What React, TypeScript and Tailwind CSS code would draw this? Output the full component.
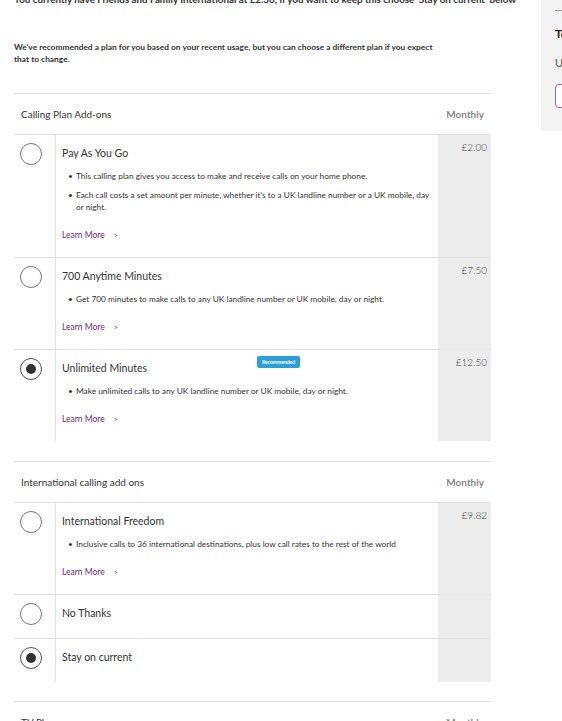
import React from "react";

type Plan = {
  title: string;
  bullets?: string[];
  price?: string;
  learnMore?: boolean;
  checked?: boolean;
  recommended?: boolean;
};

const CALLING_PLANS: Plan[] = [
  {
    title: "Pay As You Go",
    bullets: [
      "This calling plan gives you access to make and receive calls on your home phone.",
      "Each call costs a set amount per minute, whether it's to a UK landline number or a UK mobile, day or night.",
    ],
    price: "£2.00",
    learnMore: true,
  },
  {
    title: "700 Anytime Minutes",
    bullets: ["Get 700 minutes to make calls to any UK landline number or UK mobile, day or night."],
    price: "£7.50",
    learnMore: true,
  },
  {
    title: "Unlimited Minutes",
    bullets: ["Make unlimited calls to any UK landline number or UK mobile, day or night."],
    price: "£12.50",
    learnMore: true,
    checked: true,
    recommended: true,
  },
];

const INTERNATIONAL_PLANS: Plan[] = [
  {
    title: "International Freedom",
    bullets: ["Inclusive calls to 36 international destinations, plus low call rates to the rest of the world"],
    price: "£9.82",
    learnMore: true,
  },
  { title: "No Thanks" },
  { title: "Stay on current", checked: true },
];

function Radio({ checked }: { checked?: boolean }) {
  return (
    <div
      className={`w-[22px] h-[22px] rounded-full border flex items-center justify-center bg-white ${
        checked ? "border-[#555]" : "border-[#777]"
      }`}
    >
      {checked && <div className="w-[10px] h-[10px] rounded-full bg-[#333]" />}
    </div>
  );
}

function PlanRow({ plan, first }: { plan: Plan; first: boolean }) {
  const hasDetails = !!plan.bullets;
  return (
    <div className={`flex ${first ? "" : "border-t border-[#e3e3e3]"}`}>
      <div className="w-[41px] shrink-0 pt-[8px] pl-[6px]">
        <Radio checked={plan.checked} />
      </div>
      <div
        className={`relative flex-1 border-l border-[#e0e0e0] pl-[6px] pt-[11px] ${
          hasDetails ? "pb-[16px]" : "pb-[18px]"
        }`}
      >
        <div className="text-[10.5px] leading-[14px] text-[#333]">{plan.title}</div>
        {plan.recommended && (
          <span className="absolute left-[201px] top-[6px] h-[12px] w-[43px] rounded-[2px] bg-[#2b9fd6] text-white text-[5px] font-bold leading-[12px] text-center">
            Recommended
          </span>
        )}
        {plan.bullets && (
          <ul className="mt-[10px] flex flex-col gap-[7px] pr-[6px]">
            {plan.bullets.map((b, i) => (
              <li key={i} className="flex text-[8.3px] leading-[12px] text-[#333]">
                <span className="w-[14px] shrink-0 pl-[6px]">•</span>
                <span>{b}</span>
              </li>
            ))}
          </ul>
        )}
        {plan.learnMore && (
          <div className="mt-[16px] flex items-center gap-[9px] text-[8.5px] leading-[12px] text-[#6a2d7c]">
            <span>Learn More</span>
            <span className="text-[7px]">&gt;</span>
          </div>
        )}
      </div>
      <div className="w-[53px] shrink-0 bg-[#ececec] pt-[5px] pr-[4px] text-right text-[10px] leading-[14px] font-light text-[#444]">
        {plan.price}
      </div>
    </div>
  );
}

function PlanSection({ heading, plans }: { heading: string; plans: Plan[] }) {
  return (
    <section>
      <div className="border-t border-b border-[#e3e3e3] h-[42px] flex items-center justify-between px-[7px] text-[10px]">
        <span className="text-[#333]">{heading}</span>
        <span className="font-bold text-[#888]">Monthly</span>
      </div>
      {plans.map((p, i) => (
        <PlanRow key={p.title} plan={p} first={i === 0} />
      ))}
    </section>
  );
}

export default function App() {
  return (
    <div className="w-[562px] h-[721px] overflow-hidden bg-white flex font-['Lato','Liberation_Sans',sans-serif] text-[#333]">
      <main className="ml-[14px] w-[477px] shrink-0">
        <p className="-mt-[7px] text-[9.8px] leading-[12px] font-bold text-[#333] whitespace-nowrap">
          You currently have Friends and Family International at £2.30, if you want to keep this choose 'Stay on
          current' below
        </p>
        <p className="mt-[36px] pr-[46px] text-[8.4px] leading-[12px] font-bold text-[#333]">
          We've recommended a plan for you based on your recent usage, but you can choose a different plan if you
          expect that to change.
        </p>
        <div className="mt-[28px]">
          <PlanSection heading="Calling Plan Add-ons" plans={CALLING_PLANS} />
        </div>
        <div className="mt-[20px]">
          <PlanSection heading="International calling add ons" plans={INTERNATIONAL_PLANS} />
        </div>
        <div className="mt-[19px] border-t border-[#e3e3e3] h-[42px] flex items-center justify-between px-[7px] text-[10px]">
          <span className="text-[#333]">TV Plans</span>
          <span className="font-bold text-[#888]">Monthly</span>
        </div>
      </main>
      <aside className="ml-[50px] w-[200px] shrink-0 h-[131px] bg-[#f3f3f3] pl-[14px] pt-[10px]">
        <div className="h-px w-[170px] bg-[#999]" />
        <div className="mt-[16px] text-[12px] leading-[14px] font-bold text-[#222]">Total monthly cost</div>
        <div className="mt-[15px] text-[11px] leading-[14px] text-[#555]">Updated plan</div>
        <div className="mt-[14px] h-[24px] w-[160px] rounded-[4px] border border-[#b4608f] bg-white" />
      </aside>
    </div>
  );
}
